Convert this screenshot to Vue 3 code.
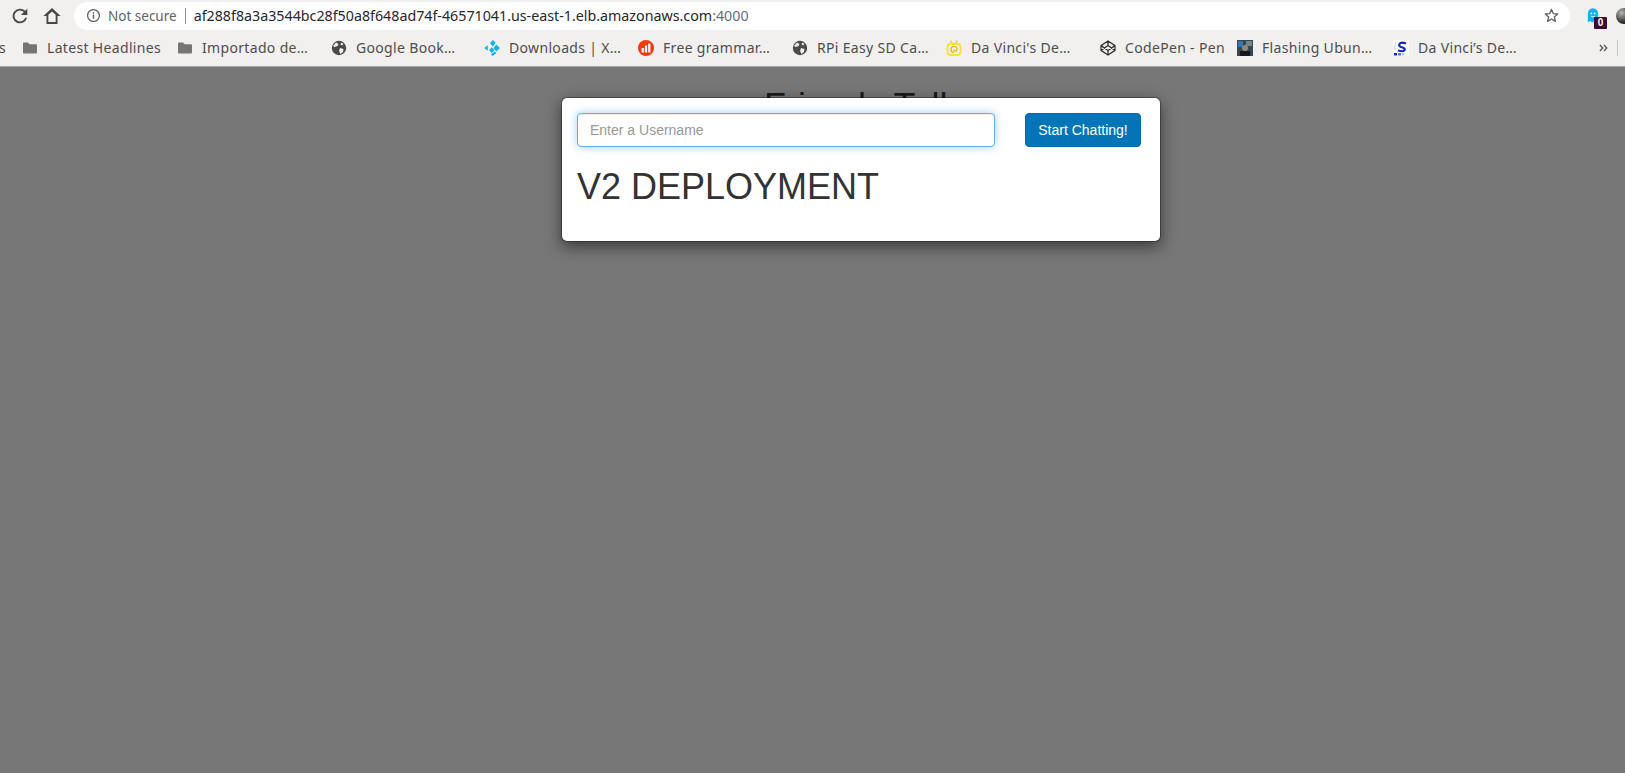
<script setup>
const bookmarks = [
  { label: 'Latest Headlines', icon: 'folder', width: 138, gap: 17 },
  { label: 'Importado de…', icon: 'folder', width: 131, gap: 23 },
  { label: 'Google Book…', icon: 'globe', width: 127, gap: 26 },
  { label: 'Downloads | X…', icon: 'kodi', width: 135, gap: 19 },
  { label: 'Free grammar…', icon: 'chart', width: 135, gap: 19 },
  { label: 'RPi Easy SD Ca…', icon: 'globe', width: 137, gap: 17 },
  { label: "Da Vinci's De…", icon: 'tv', width: 140, gap: 14 },
  { label: 'CodePen - Pen', icon: 'codepen', width: 121, gap: 16 },
  { label: 'Flashing Ubun…', icon: 'photo', width: 137, gap: 19 },
  { label: 'Da Vinci’s De…', icon: 'stack', width: 124, gap: 0 },
]
</script>

<template>
  <div class="screen">
    <header class="chrome">
      <div class="toolbar">
        <svg class="nav reload" viewBox="0 0 24 24"><path d="M17.65 6.35A8 8 0 1 0 19.73 14h-2.08a6 6 0 1 1-1.41-6.24L13 11h7V4z" /></svg>
        <svg class="nav home" viewBox="0 0 24 24"><path d="M12 3.2 2.6 12H6v8.6h12V12h3.4zM8 18.6v-7.9l4-3.7 4 3.7v7.9z" /></svg>
        <div class="omnibox">
          <svg class="info" viewBox="0 0 16 16"><circle cx="8" cy="8" r="6.300" fill="none" stroke="#5f6368" stroke-width="1.400" /><rect x="7.200" y="7" width="1.600" height="4.400" fill="#5f6368" /><rect x="7.200" y="4.500" width="1.600" height="1.600" fill="#5f6368" /></svg>
          <span class="secure">Not secure</span>
          <span class="divider"></span>
          <span class="url">af288f8a3a3544bc28f50a8f648ad74f-46571041.us-east-1.elb.amazonaws.com<span class="port">:4000</span></span>
          <svg class="star" viewBox="0 0 24 24"><path d="M12 3.500l2.500 5.800 6.300.6-4.800 4.100 1.500 6.200L12 17l-5.500 3.200L8 14 3.200 9.900l6.300-.6z" fill="none" stroke="#5f6368" stroke-width="1.900" stroke-linejoin="round" /></svg>
        </div>
        <div class="extension">
          <svg class="ghost" viewBox="0 0 14 18"><path d="M.8 17V6.500a6.200 6.200 0 0 1 12.400 0V15l-2.400 2.500-2.200-2-2.600 2-2.400-2z" fill="#10b2ee" /><circle cx="5" cy="6.500" r="1.100" fill="#fff" /><circle cx="9" cy="6.500" r="1.100" fill="#fff" /><path d="M4.500 9.800q2.500 1.700 5 0" stroke="#fff" fill="none" /></svg>
          <span class="count">0</span>
        </div>
        <div class="avatar"></div>
      </div>
      <nav class="bookmarks">
        <span class="cut">s</span>
        <div v-for="b in bookmarks" :key="b.label + b.icon" class="bookmark" :style="{ width: b.width + 'px', marginRight: b.gap + 'px' }">
          <svg v-if="b.icon === 'folder'" class="fav" viewBox="0 0 16 16"><path d="M1 3.500A1 1 0 0 1 2 2.500h4l1.600 1.800H14a1 1 0 0 1 1 1v7.200a1 1 0 0 1-1 1H2a1 1 0 0 1-1-1z" fill="#757575" /></svg>
          <svg v-else-if="b.icon === 'globe'" class="fav" viewBox="0 0 16 16"><circle cx="8" cy="8" r="7.200" fill="#4a4a4a" /><path d="M5 2.500 7.500 4 6.500 6 4 7 2 6zM9 8l3.500 1-.5 3-2.500 2L8 11zM10.500 2.500l2 1.500-1.500 1.500-1.500-1z" fill="#f1f0ee" /></svg>
          <svg v-else-if="b.icon === 'kodi'" class="fav" viewBox="0 0 16 16"><path d="M8.800 0 11.600 2.800 8.800 6.400 6 3.200zM12.400 4.600 16 8l-3.600 3.600L9.400 8zM7.800 7.200 10.600 10.200 7.800 13 5 10.200zM3.800 5.200v5.600L0 8zM8.800 13l2-1.400 1.600 1.500-3.600 2.900-2-1.800z" fill="#17b2e7" /></svg>
          <svg v-else-if="b.icon === 'chart'" class="fav" viewBox="0 0 16 16"><circle cx="8" cy="8" r="8" fill="#f0390f" /><rect x="3.600" y="8" width="2.200" height="4.500" fill="#fff" /><rect x="6.900" y="5.500" width="2.200" height="7" fill="#fff" /><rect x="10.200" y="3.500" width="2.200" height="9" fill="#fff" /></svg>
          <svg v-else-if="b.icon === 'tv'" class="fav" viewBox="0 0 16 16"><path d="M4.500.5 7 4M11.500.5 9 4" stroke="#e8c800" stroke-width="1.200" fill="none" /><rect x="1.500" y="4" width="13" height="11" rx="3" fill="none" stroke="#f8de3a" stroke-width="1.800" /><path d="M8 12.500a3 3 0 1 1 3-3.500c.2 1.600-1 2.300-2.100 2.100-.9-.2-1.200-1.200-.5-1.700" stroke="#e0b400" stroke-width="1.200" fill="none" /></svg>
          <svg v-else-if="b.icon === 'codepen'" class="fav" viewBox="0 0 16 16"><path d="M8 1 15 5.600v4.800L8 15 1 10.400V5.600zM8 1v4.500M8 15v-4.500M1 5.600l7 4.900 7-4.900M1 10.400l7-4.900 7 4.900" fill="none" stroke="#333" stroke-width="1.300" stroke-linejoin="round" /></svg>
          <svg v-else-if="b.icon === 'photo'" class="fav" viewBox="0 0 16 16"><rect width="16" height="16" fill="#39464c" /><rect x="1" y="1" width="5" height="6" fill="#2f78b8" /><rect x="9" y="1" width="6" height="5" fill="#76878c" /><circle cx="8" cy="8" r="3" fill="#8f8a80" /><rect x="3" y="11" width="10" height="5" fill="#14181c" /></svg>
          <svg v-else class="fav" viewBox="0 0 16 16"><rect width="16" height="16" fill="#fbfbfb" /><path d="M3 1.500Q1 6 2 10" stroke="#b9d6ee" fill="none" /><path d="M13 3.500Q8 1.500 6.500 4t3 3.500q3 1 2 2.800T5 10.500" stroke="#0d2ea8" stroke-width="2.200" fill="none" /><rect x="1" y="13" width="3" height="2.500" fill="#0d2ea8" /><rect x="5" y="13" width="3" height="2.500" fill="#4b7fd0" /><rect x="9" y="13" width="2.500" height="2.500" fill="#b6cdea" /></svg>
          <span class="label">{{ b.label }}</span>
        </div>
        <svg class="more" viewBox="0 0 10 8"><path d="M1 .5 4 4 1 7.500M5.500 .5 8.500 4l-3 3.500" fill="none" stroke="#555" stroke-width="1.600" /></svg>
        <span class="bar-sep"></span>
      </nav>
    </header>

    <main class="page">
      <h1 class="title">Friends Talk</h1>
      <div class="modal">
        <div class="entry">
          <input class="name" placeholder="Enter a Username" />
          <button class="start" type="button">Start Chatting!</button>
        </div>
        <h2 class="deploy">V2 DEPLOYMENT</h2>
      </div>
    </main>
  </div>
</template>

<style>
html, body { margin: 0; overflow: hidden; }
</style>

<style scoped>
.screen { width: 1625px; height: 773px; display: flex; flex-direction: column; overflow: hidden; background: #777; }
.chrome { height: 67px; flex: none; background: #f1f0ee; box-sizing: border-box; border-bottom: 1px solid #a9a9a9; font-family: "Noto Sans", sans-serif; overflow: hidden; }
.toolbar { height: 30px; padding-top: 1px; box-sizing: border-box; display: flex; align-items: center; }
.nav { width: 22px; height: 22px; fill: #474747; flex: none; }
.reload { margin-left: 9px; }
.home { margin-left: 10px; }
.omnibox { margin-left: 11px; width: 1496px; height: 28px; flex: none; border-radius: 14px; background: #fff; display: flex; align-items: center; box-sizing: border-box; padding-left: 12px; }
.info { width: 15px; height: 15px; flex: none; }
.secure { margin-left: 7px; font-size: 13.500px; color: #5f6368; white-space: nowrap; }
.divider { width: 1px; height: 16px; background: #8a8d91; margin-left: 8px; }
.url { margin-left: 8px; font-size: 14.250px; color: #26282b; white-space: nowrap; }
.port { color: #6b6f73; }
.star { width: 17px; height: 17px; margin-left: auto; margin-right: 10px; flex: none; }
.extension { position: relative; margin-left: 16px; width: 24px; height: 24px; flex: none; }
.ghost { position: absolute; left: 1px; top: 4px; width: 12px; height: 15px; }
.count { position: absolute; left: 8px; top: 13px; width: 13px; height: 12px; background: #3d0a34; color: #fff; font: bold 10px/12px "Liberation Sans", sans-serif; text-align: center; border-radius: 1px; }
.avatar { margin-left: 6px; width: 16px; height: 16px; flex: none; border-radius: 50%; background: radial-gradient(circle at 35% 30%, #b5b5b5, #2c2c2c 65%); }
.bookmarks { height: 36px; display: flex; align-items: center; position: relative; font-size: 14px; letter-spacing: .33px; color: #4d4d4d; white-space: nowrap; }
.cut { width: 23px; box-sizing: border-box; margin-left: -1px; margin-bottom: 2px; flex: none; }
.bookmark { display: flex; align-items: center; flex: none; }
.fav { width: 16px; height: 16px; flex: none; margin-right: 9px; }
.label { display: block; margin-bottom: 2px; }
.more { width: 9px; height: 8px; margin-left: 82px; flex: none; }
.bar-sep { width: 1px; height: 16px; background: #c9c9c9; margin-left: 9px; flex: none; }
.page { flex: 1; position: relative; font-family: "Liberation Sans", sans-serif; }
.title { margin: 20px 0 0 764px; font-weight: 400; font-size: 36px; line-height: 40px; color: #1c1c1c; }
.modal { position: absolute; left: 561px; top: 30px; width: 600px; height: 145px; box-sizing: border-box; background: #fff; border-radius: 6px; border: 1px solid rgba(0, 0, 0, .3); background-clip: padding-box; box-shadow: 0 5px 15px rgba(0, 0, 0, .5); padding: 15px 19px 0 15px; }
.entry { display: flex; justify-content: space-between; align-items: flex-start; }
.name { width: 418px; height: 34px; box-sizing: border-box; border: 1px solid #66afe9; border-radius: 4px; padding: 6px 12px; font: 14px "Liberation Sans", sans-serif; color: #555; outline: none; box-shadow: inset 0 1px 1px rgba(0, 0, 0, .075), 0 0 8px rgba(102, 175, 233, .6); }
.name::placeholder { color: #999; opacity: 1; }
.start { width: 116px; height: 34px; border: 1px solid #0269a4; border-radius: 4px; background: #0275b8; color: #fff; font: 14px "Liberation Sans", sans-serif; padding: 0; }
.deploy { margin: 20px 0 0; font-weight: 400; font-size: 36px; line-height: 40px; color: #333; }
</style>
